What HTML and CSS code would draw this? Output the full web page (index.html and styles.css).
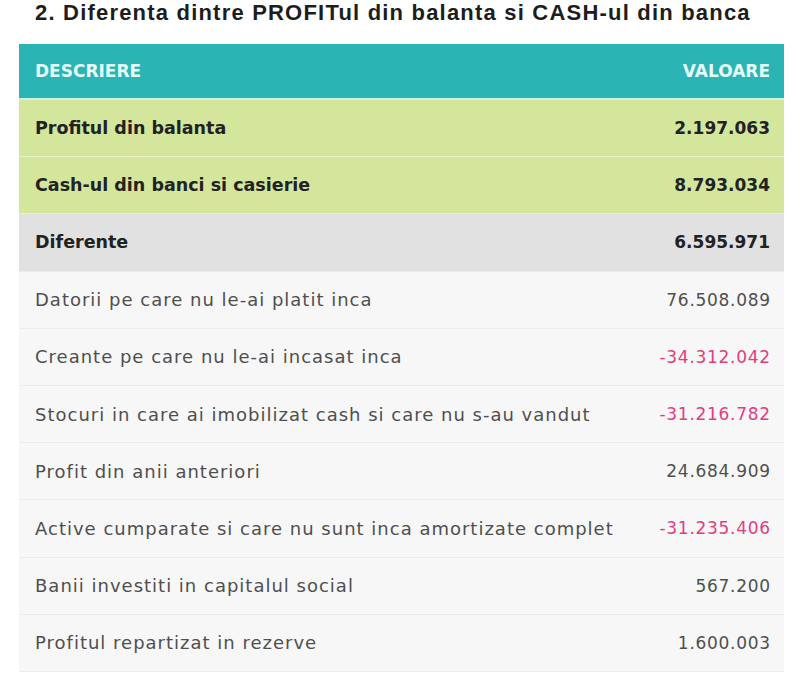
FILE: index.html
```html
<!DOCTYPE html>
<html>
<head>
<meta charset="utf-8">
<link rel="stylesheet" href="styles.css">
</head>
<body>
<h2 class="title">2. Diferenta dintre PROFITul din balanta si CASH-ul din banca</h2>
<div class="table">
  <div class="row head"><span>DESCRIERE</span><span>VALOARE</span></div>
  <div class="row green strong"><span>Profitul din balanta</span><span class="val">2.197.063</span></div>
  <div class="row green strong"><span>Cash-ul din banci si casierie</span><span class="val">8.793.034</span></div>
  <div class="row gray strong"><span>Diferente</span><span class="val">6.595.971</span></div>
  <div class="row"><span class="desc">Datorii pe care nu le-ai platit inca</span><span class="val">76.508.089</span></div>
  <div class="row"><span class="desc">Creante pe care nu le-ai incasat inca</span><span class="val neg">-34.312.042</span></div>
  <div class="row"><span class="desc">Stocuri in care ai imobilizat cash si care nu s-au vandut</span><span class="val neg">-31.216.782</span></div>
  <div class="row"><span class="desc">Profit din anii anteriori</span><span class="val">24.684.909</span></div>
  <div class="row"><span class="desc">Active cumparate si care nu sunt inca amortizate complet</span><span class="val neg">-31.235.406</span></div>
  <div class="row"><span class="desc">Banii investiti in capitalul social</span><span class="val">567.200</span></div>
  <div class="row"><span class="desc">Profitul repartizat in rezerve</span><span class="val">1.600.003</span></div>
</div>
</body>
</html>
```
FILE: styles.css
```css
html, body { margin: 0; padding: 0; background: #fff; }
body { width: 801px; height: 675px; overflow: hidden; }
.title {
  margin: 0;
  padding: 0 0 0 35px;
  height: 44px;
  box-sizing: border-box;
  font-family: "Liberation Sans", Arial, sans-serif;
  font-weight: 700;
  font-size: 22px;
  letter-spacing: 1.2px;
  line-height: 25px;
  color: #1d1d1d;
  white-space: nowrap;
}
.table {
  margin-left: 19px;
  width: 765px;
  font-family: "DejaVu Sans", sans-serif;
}
.row {
  display: flex;
  justify-content: space-between;
  align-items: center;
  height: 57.2px;
  box-sizing: border-box;
  padding: 0 14px 0 16px;
  background: #f7f7f7;
  border-bottom: 1px solid #ececec;
  font-size: 18px;
  color: #4f4f4f;
}
.desc { letter-spacing: 1px; }
.val { font-size: 17px; letter-spacing: 0.7px; margin-right: -0.7px; }
.head {
  height: 56px;
  background: #2bb4b4;
  border-bottom: 2px solid #c6f2ec;
  color: #e4fbf8;
  font-weight: 700;
  font-size: 17px;
}
.green { background: #d4e69c; border-bottom-color: #e6f0c8; }
.gray { background: #e1e1e1; border-bottom-color: #ececec; }
.strong { font-weight: 700; color: #222; font-size: 17.5px; }
.strong .val { font-size: 17px; letter-spacing: 0; margin-right: 0; }
.neg { color: #e33d7f; }
```
